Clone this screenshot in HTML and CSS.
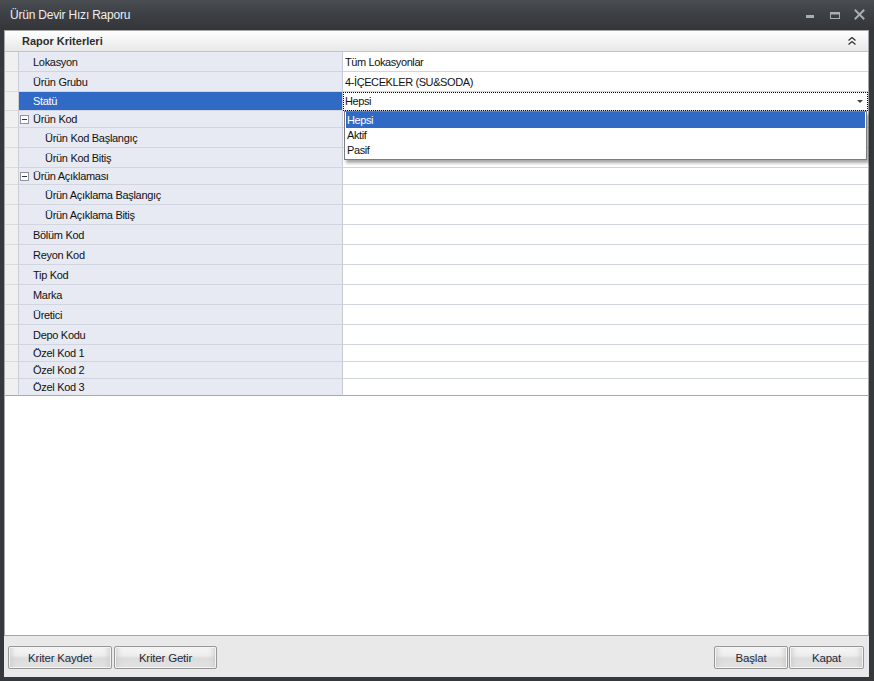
FILE: index.html
```html
<!DOCTYPE html>
<html lang="tr">
<head>
<meta charset="utf-8">
<title>Ürün Devir Hızı Raporu</title>
<link rel="stylesheet" href="styles.css">
</head>
<body>
<div class="window">
  <div class="titlebar">
    <span class="title">Ürün Devir Hızı Raporu</span>
    <svg class="controls" width="60" height="30" viewBox="0 0 60 30">
      <rect x="1" y="15" width="8" height="3" fill="#a9aeb6"/>
      <rect x="25.5" y="12.5" width="9" height="6" fill="none" stroke="#a9aeb6" stroke-width="1"/>
      <rect x="25" y="12" width="10" height="2.5" fill="#a9aeb6"/>
      <path d="M50.5 10.5 L58.5 18.5 M58.5 10.5 L50.5 18.5" stroke="#a9aeb6" stroke-width="2" stroke-linecap="square"/>
    </svg>
  </div>
  <div class="body">
    <div class="content">
      <div class="panel-head">
        <span class="panel-title">Rapor Kriterleri</span>
        <svg width="8" height="8" viewBox="0 0 8 8">
          <path d="M0.5 3.5 L4 0.5 L7.5 3.5 M0.5 7.5 L4 4.5 L7.5 7.5" fill="none" stroke="#333" stroke-width="1.3"/>
        </svg>
      </div>
      <div class="grid">
        <div class="row r20"><div class="gut"></div><div class="label">Lokasyon</div><div class="value">Tüm Lokasyonlar</div></div>
        <div class="row r20"><div class="gut"></div><div class="label">Ürün Grubu</div><div class="value">4-İÇECEKLER (SU&amp;SODA)</div></div>
        <div class="row r19"><div class="gut"></div><div class="label selected">Statü</div>
          <div class="value focus">Hepsi
            <span class="arrow"></span>
            <div class="dropdown">
              <div class="item sel">Hepsi</div>
              <div class="item">Aktif</div>
              <div class="item">Pasif</div>
            </div>
          </div>
        </div>
        <div class="row r17"><div class="gut"></div><div class="label group"><span class="minus"></span>Ürün Kod</div><div class="value"></div></div>
        <div class="row r20"><div class="gut"></div><div class="label sub">Ürün Kod Başlangıç</div><div class="value"></div></div>
        <div class="row r20"><div class="gut"></div><div class="label sub">Ürün Kod Bitiş</div><div class="value"></div></div>
        <div class="row r17"><div class="gut"></div><div class="label group"><span class="minus"></span>Ürün Açıklaması</div><div class="value"></div></div>
        <div class="row r20"><div class="gut"></div><div class="label sub">Ürün Açıklama Başlangıç</div><div class="value"></div></div>
        <div class="row r20"><div class="gut"></div><div class="label sub">Ürün Açıklama Bitiş</div><div class="value"></div></div>
        <div class="row r20"><div class="gut"></div><div class="label">Bölüm Kod</div><div class="value"></div></div>
        <div class="row r20"><div class="gut"></div><div class="label">Reyon Kod</div><div class="value"></div></div>
        <div class="row r20"><div class="gut"></div><div class="label">Tip Kod</div><div class="value"></div></div>
        <div class="row r20"><div class="gut"></div><div class="label">Marka</div><div class="value"></div></div>
        <div class="row r20"><div class="gut"></div><div class="label">Üretici</div><div class="value"></div></div>
        <div class="row r20"><div class="gut"></div><div class="label">Depo Kodu</div><div class="value"></div></div>
        <div class="row r17"><div class="gut"></div><div class="label">Özel Kod 1</div><div class="value"></div></div>
        <div class="row r17"><div class="gut"></div><div class="label">Özel Kod 2</div><div class="value"></div></div>
        <div class="row r17 last"><div class="gut"></div><div class="label">Özel Kod 3</div><div class="value"></div></div>
      </div>
    </div>
    <div class="footer">
      <button class="btn w104">Kriter Kaydet</button>
      <button class="btn w103">Kriter Getir</button>
      <div class="spacer"></div>
      <button class="btn w74">Başlat</button>
      <button class="btn w75">Kapat</button>
    </div>
  </div>
</div>
</body>
</html>
```
FILE: styles.css
```css
html, body {
  margin: 0;
  padding: 0;
  background: #2e3034;
}
body {
  font-family: "Liberation Sans", Arial, sans-serif;
  font-size: 11px;
  color: #111;
}
.window {
  width: 874px;
  height: 681px;
  display: flex;
  flex-direction: column;
  background: #35383c;
  box-sizing: border-box;
}
.titlebar {
  height: 30px;
  flex: none;
  display: flex;
  align-items: center;
  background: linear-gradient(#4a4d52 0%, #3d4044 45%, #333539 100%);
}
.title {
  padding-left: 10px;
  font-size: 12px;
  letter-spacing: -0.2px;
  color: #eeeeee;
  margin-top: -1px;
}
.controls {
  margin-left: auto;
  margin-right: 9px;
}
.body {
  flex: 1;
  margin: 0 5px 4px 4px;
  display: flex;
  flex-direction: column;
  background: #e9e9e9;
  min-height: 0;
}
.content {
  flex: 1;
  background: #fff;
  border: 1px solid #a6a6a6;
  display: flex;
  flex-direction: column;
  min-height: 0;
}
.panel-head {
  height: 20px;
  flex: none;
  border-bottom: 1px solid #c3c3c3;
  background: linear-gradient(#fefefe 0%, #f3f3f3 50%, #e8e8e8 100%);
  display: flex;
  align-items: center;
  justify-content: space-between;
  padding: 0 12px 0 17px;
}
.panel-title {
  font-weight: bold;
  color: #2e2e2e;
  font-size: 11px;
}
.grid {
  display: flex;
  flex-direction: column;
}
.row {
  display: flex;
  box-sizing: border-box;
}
.r20 { height: 20px; }
.r19 { height: 19px; }
.r17 { height: 17px; }
.gut {
  width: 14px;
  flex: none;
  box-sizing: border-box;
  background: #f0f0f0;
  border-right: 1px solid #c9ccd6;
  border-bottom: 1px solid #dadada;
}
.label {
  width: 324px;
  flex: none;
  box-sizing: border-box;
  background: #e7eaf3;
  border-right: 1px solid #c7cbd7;
  border-bottom: 1px solid #d1d5e0;
  padding-left: 14px;
  display: flex;
  align-items: center;
  letter-spacing: -0.3px;
  white-space: nowrap;
}
.label.sub { padding-left: 26px; }
.label.group { padding-left: 1px; }
.label.selected {
  background: #316ac5;
  color: #fff;
}
.minus {
  width: 9px;
  height: 9px;
  box-sizing: border-box;
  border: 1px solid #8a93a3;
  background: #fff;
  margin-right: 4px;
  position: relative;
  flex: none;
}
.minus::after {
  content: "";
  position: absolute;
  left: 1px;
  top: 3px;
  width: 5px;
  height: 1px;
  background: #333;
}
.value {
  flex: 1;
  box-sizing: border-box;
  border-bottom: 1px solid #d1d5e0;
  padding-left: 2px;
  display: flex;
  align-items: center;
  letter-spacing: -0.4px;
  white-space: nowrap;
  position: relative;
}
.row.last .gut,
.row.last .label,
.row.last .value {
  border-bottom-color: #a9a9a9;
}
.value.focus {
  outline: 1px dotted #000;
  outline-offset: -1px;
}
.arrow {
  position: absolute;
  right: 5px;
  top: 8px;
  width: 0;
  height: 0;
  border-left: 3px solid transparent;
  border-right: 3px solid transparent;
  border-top: 3px solid #444;
}
.dropdown {
  position: absolute;
  left: 1px;
  top: 19px;
  width: 523px;
  box-sizing: border-box;
  border: 1px solid #7c7c7c;
  background: #fff;
  box-shadow: 2px 3px 3px rgba(0, 0, 0, 0.35);
  padding: 0 1px 1px 1px;
  z-index: 5;
  color: #111;
}
.item {
  height: 15px;
  line-height: 15px;
  padding-left: 1px;
}
.item.sel {
  height: 16px;
  line-height: 16px;
  background: #316ac5;
  color: #fff;
}
.footer {
  height: 41px;
  flex: none;
  display: flex;
  align-items: flex-start;
  padding: 10px 5px 0 4px;
  box-sizing: border-box;
  gap: 2px;
}
.spacer { flex: 1; }
.btn {
  height: 23px;
  box-sizing: border-box;
  border: 1px solid #979797;
  border-radius: 2px;
  background: linear-gradient(#f8f8f8 0%, #ededed 40%, #dcdcdc 55%, #e4e4e4 100%);
  box-shadow: inset 0 0 0 1px #f4f4f4, inset 6px 0 6px -4px #c8c8c8, inset -6px 0 6px -4px #c8c8c8;
  font-family: "Liberation Sans", Arial, sans-serif;
  font-size: 11.5px;
  letter-spacing: -0.2px;
  color: #1e2a3c;
  padding: 0;
}
.w104 { width: 104px; }
.w103 { width: 103px; }
.w74 { width: 74px; }
.w75 { width: 75px; margin-left: -1px; }
```
